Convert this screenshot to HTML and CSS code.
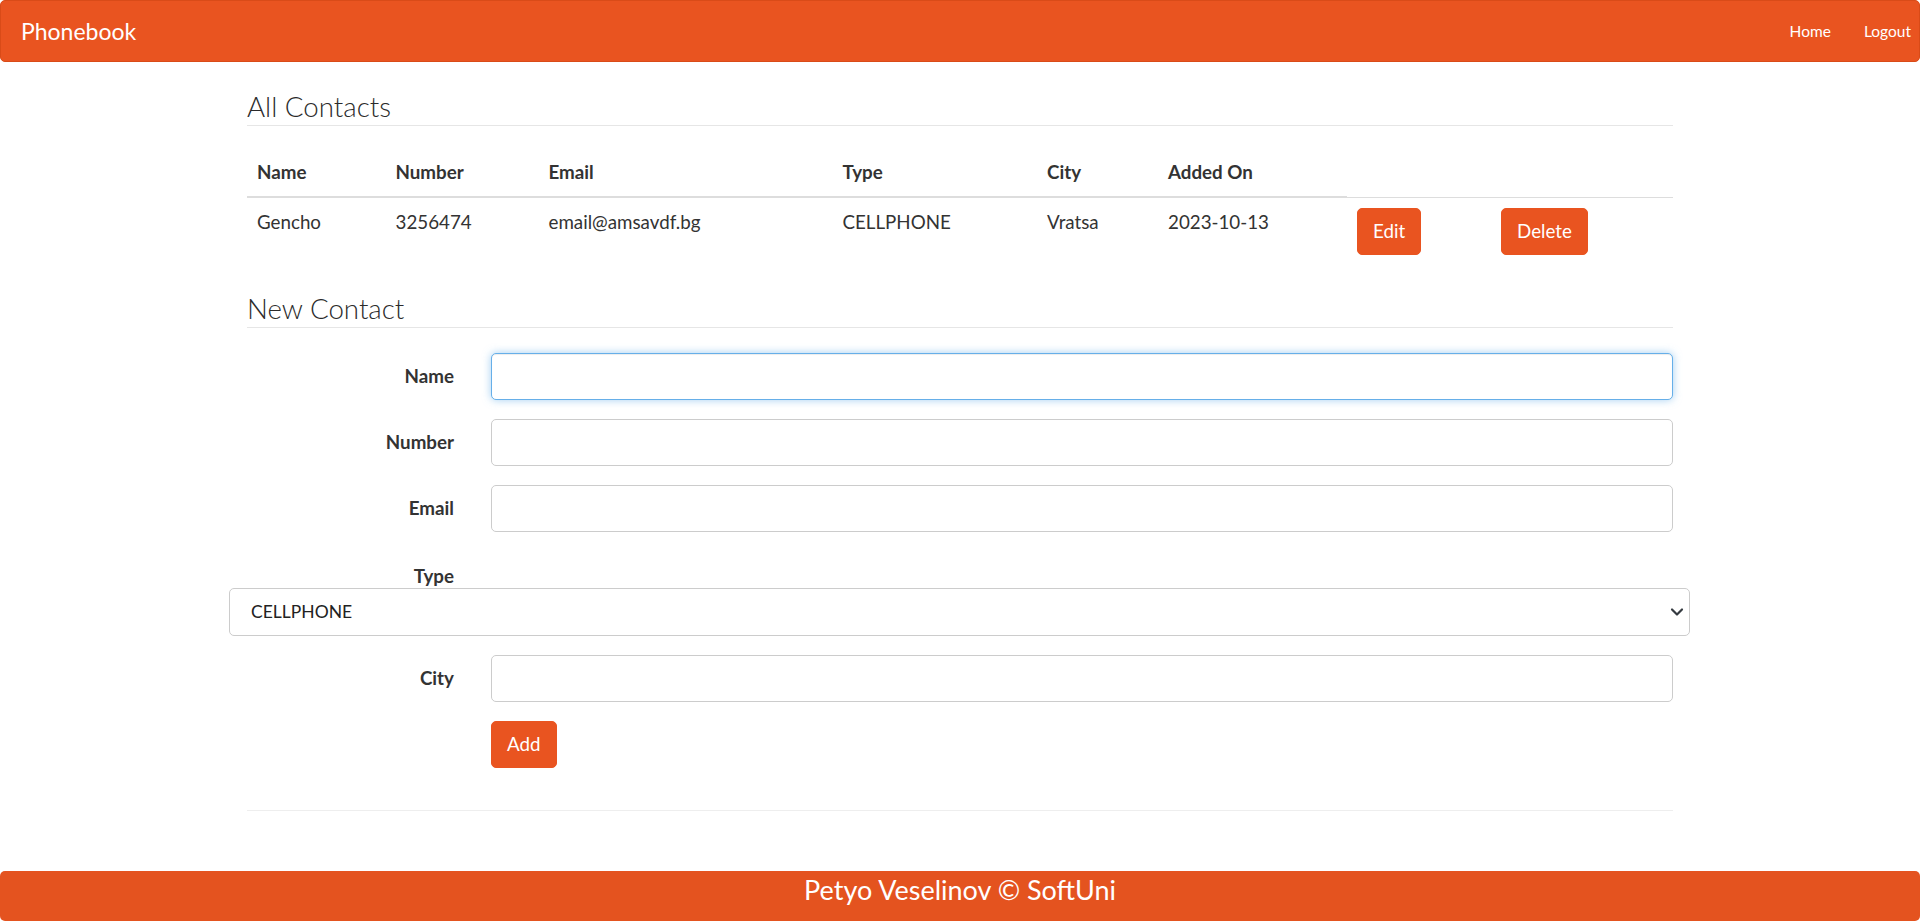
FILE: index.html
```html
<!DOCTYPE html>
<html lang="en">
<head>
<meta charset="utf-8">
<title>Phonebook</title>
<link rel="stylesheet" href="styles.css">
</head>
<body>
<header class="navbar">
  <a class="brand" href="#">Phonebook</a>
  <nav class="nav">
    <a class="nav-link" href="#">Home</a>
    <a class="nav-link" href="#">Logout</a>
  </nav>
</header>

<main class="container">
  <h2 class="section-title first">All Contacts</h2>
  <table class="contacts">
    <colgroup>
      <col class="c-name"><col class="c-number"><col class="c-email"><col class="c-type">
      <col class="c-city"><col class="c-added"><col class="c-edit"><col class="c-delete">
    </colgroup>
    <thead>
      <tr><th>Name</th><th>Number</th><th>Email</th><th>Type</th><th>City</th><th>Added On</th></tr>
    </thead>
    <tbody>
      <tr>
        <td>Gencho</td><td>3256474</td><td>email@amsavdf.bg</td><td>CELLPHONE</td><td>Vratsa</td><td>2023-10-13</td>
        <td><button class="btn" type="button">Edit</button></td>
        <td><button class="btn" type="button">Delete</button></td>
      </tr>
    </tbody>
  </table>

  <h2 class="section-title second">New Contact</h2>
  <form class="contact-form">
    <div class="form-row">
      <label class="form-label" for="name">Name</label>
      <input class="form-control focused" id="name" type="text">
    </div>
    <div class="form-row">
      <label class="form-label" for="number">Number</label>
      <input class="form-control" id="number" type="text">
    </div>
    <div class="form-row">
      <label class="form-label" for="email">Email</label>
      <input class="form-control" id="email" type="text">
    </div>
    <div class="type-group">
      <div class="type-label-row">
        <label class="form-label type-label" for="type">Type</label>
      </div>
      <div class="select-wrap">
        <select class="form-select" id="type">
          <option>CELLPHONE</option>
          <option>HOME</option>
          <option>WORK</option>
        </select>
        <svg class="chevron" width="14" height="10" viewBox="0 0 14 10"><path d="M2 2.5 L7 7.5 L12 2.5" fill="none" stroke="#343a40" stroke-width="2.2" stroke-linecap="round" stroke-linejoin="round"/></svg>
      </div>
    </div>
    <div class="form-row">
      <label class="form-label" for="city">City</label>
      <input class="form-control" id="city" type="text">
    </div>
    <div class="form-row">
      <span class="form-label"></span>
      <div><button class="btn" type="button">Add</button></div>
    </div>
  </form>
  <hr class="divider">
</main>

<footer class="footer">Petyo Veselinov © SoftUni</footer>
</body>
</html>
```

FILE: styles.css
```css
html, body {
  margin: 0;
  padding: 0;
}

body {
  min-height: 100vh;
  display: flex;
  flex-direction: column;
  font-family: Lato, "Open Sans", sans-serif;
  font-size: 18.75px;
  line-height: 28px;
  color: #333333;
  background: #ffffff;
}

/* Navbar */
.navbar {
  box-sizing: border-box;
  height: 62px;
  background: #e95420;
  border: 1px solid #d94b18;
  border-radius: 5px;
  display: flex;
  align-items: center;
  justify-content: space-between;
  padding: 0 8px 0 20px;
}

.brand {
  color: #ffffff;
  text-decoration: none;
  font-size: 23px;
  line-height: 30px;
  margin-top: -1px;
}

.nav {
  display: flex;
  gap: 33px;
}

.nav-link {
  color: #ffffff;
  text-decoration: none;
  font-size: 15.5px;
  line-height: 24px;
}

/* Main container */
.container {
  width: 1426px;
  margin: 0 auto;
}

.section-title {
  margin: 0;
  font-size: 27.7px;
  font-weight: 300;
  line-height: 33px;
  color: #2b2b2b;
  padding-bottom: 2px;
  border-bottom: 1px solid #e6e6e6;
}

.section-title.first {
  margin-top: 28px;
}

.section-title.second {
  margin-top: 27px;
}

/* Table */
.contacts {
  width: 1426px;
  border-collapse: collapse;
  table-layout: fixed;
  margin-top: 22px;
}

.c-name { width: 138.5px; }
.c-number { width: 153px; }
.c-email { width: 294px; }
.c-type { width: 204.5px; }
.c-city { width: 121px; }
.c-added { width: 189px; }
.c-edit { width: 144px; }
.c-delete { width: 182px; }

.contacts th {
  text-align: left;
  font-weight: 700;
  padding: 10px;
  border-bottom: 2px solid #dddddd;
  vertical-align: bottom;
}

.contacts td {
  padding: 10px;
  border-top: 1px solid #dddddd;
  vertical-align: top;
}

/* Buttons */
.btn {
  font-family: inherit;
  font-size: 18.75px;
  line-height: 28px;
  color: #ffffff;
  background: #e95420;
  border: 1px solid #e95420;
  border-radius: 5px;
  padding: 8.5px 15px;
  cursor: pointer;
}

/* Form */
.contact-form {
  margin-top: 25px;
}

.form-row {
  display: grid;
  grid-template-columns: 207px 1fr;
  column-gap: 37px;
  align-items: center;
  margin-bottom: 19px;
}

.form-label {
  text-align: right;
  font-weight: 700;
}

.form-control {
  box-sizing: border-box;
  height: 47px;
  width: 100%;
  border: 1px solid #cccccc;
  border-radius: 5px;
  font-family: inherit;
  font-size: 18.75px;
  padding: 8px 15px;
  background: #ffffff;
  outline: none;
}

.form-control.focused {
  border-color: #66afe9;
  box-shadow: inset 0 1px 1px rgba(0, 0, 0, 0.075), 0 0 8px rgba(102, 175, 233, 0.6);
}

.type-group {
  margin-bottom: 19px;
}

.type-label-row {
  display: grid;
  grid-template-columns: 207px 1fr;
  column-gap: 37px;
  padding-top: 12px;
}

.type-label {
  line-height: 25px;
}

.select-wrap {
  position: relative;
  margin: 0 -17px 0 -18px;
}

.form-select {
  box-sizing: border-box;
  display: block;
  width: 100%;
  height: 48px;
  border: 1px solid #cccccc;
  border-radius: 5px;
  background: #ffffff;
  font-family: inherit;
  font-size: 17.5px;
  color: #222222;
  padding: 0 40px 0 21px;
  appearance: none;
  -webkit-appearance: none;
  outline: none;
}

.chevron {
  position: absolute;
  right: 6px;
  top: 19px;
  pointer-events: none;
}

.divider {
  margin: 42px 0 0;
  border: 0;
  border-top: 1px solid #eeeeee;
}

/* Footer */
.footer {
  margin-top: auto;
  box-sizing: border-box;
  height: 50px;
  background: #e4531f;
  border-radius: 5px;
  color: #ffffff;
  text-align: center;
  font-size: 27px;
  line-height: 36px;
  padding-top: 1px;
}
```
